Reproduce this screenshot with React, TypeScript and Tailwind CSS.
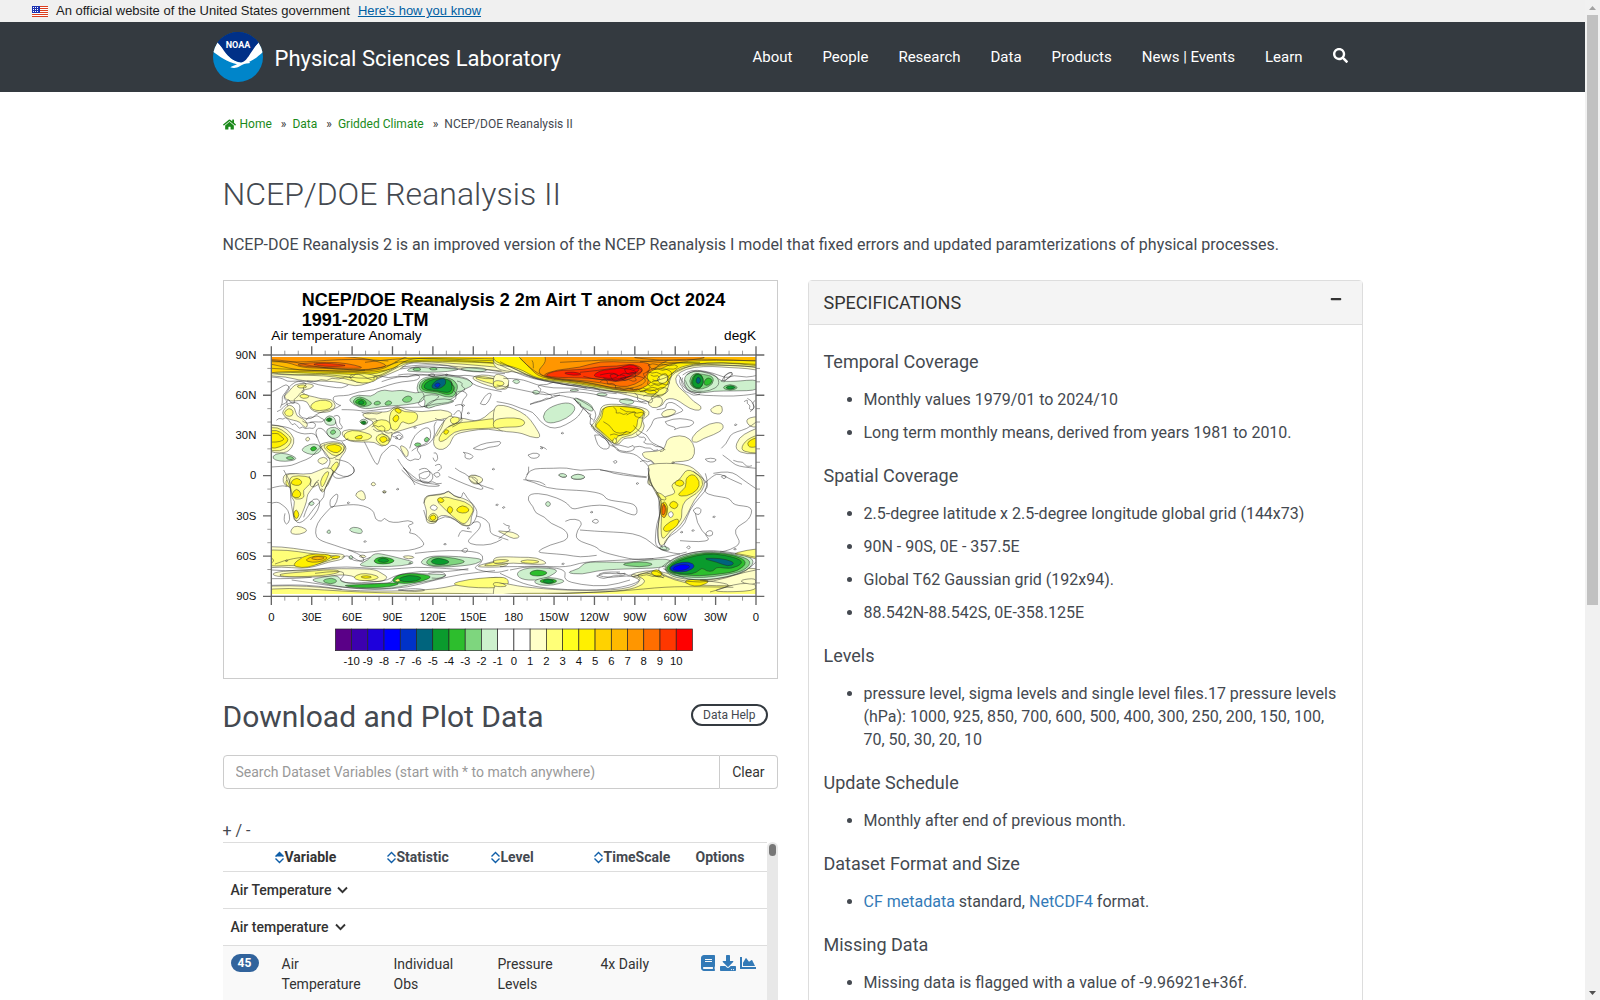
import type { ReactNode } from "react";
import { FaBook, FaChartArea, FaDownload, FaHome, FaMinus, FaSearch } from "react-icons/fa";

const navItems = ["About", "People", "Research", "Data", "Products", "News | Events", "Learn"];

const crumbs = ["Data", "Gridded Climate"];

const specs: { title: string; items: ReactNode[] }[] = [
  {
    title: "Temporal Coverage",
    items: ["Monthly values 1979/01 to 2024/10", "Long term monthly means, derived from years 1981 to 2010."],
  },
  {
    title: "Spatial Coverage",
    items: [
      "2.5-degree latitude x 2.5-degree longitude global grid (144x73)",
      "90N - 90S, 0E - 357.5E",
      "Global T62 Gaussian grid (192x94).",
      "88.542N-88.542S, 0E-358.125E",
    ],
  },
  {
    title: "Levels",
    items: [
      "pressure level, sigma levels and single level files.17 pressure levels (hPa): 1000, 925, 850, 700, 600, 500, 400, 300, 250, 200, 150, 100, 70, 50, 30, 20, 10",
    ],
  },
  { title: "Update Schedule", items: ["Monthly after end of previous month."] },
  {
    title: "Dataset Format and Size",
    items: [
      <>
        <a href="#cf" className="text-[#337ab7]">CF metadata</a> standard,{" "}
        <a href="#netcdf" className="text-[#337ab7]">NetCDF4</a> format.
      </>,
    ],
  },
  { title: "Missing Data", items: ["Missing data is flagged with a value of -9.96921e+36f."] },
];

// anomaly scale, coldest first
const scale = [
  "#5a0087", "#3c00af", "#1e00dc", "#0000ff", "#0032c8", "#00647d", "#0a9b2d", "#2dbe2d", "#7ed67e", "#cdf0cd", "#ffffff",
  "#ffffff", "#ffffc8", "#ffff78", "#ffff1e", "#fff000", "#ffd200", "#ffb900", "#ff9600", "#ff6e00", "#ff3700", "#ff0000",
];

// [index into scale, or -1 for a bare contour, points]
type Shape = [number, string];

const northEast: Shape[] = [
  [12, "140,230 900,230 900,300 820,282 740,285 700,270 640,266 580,262 555,285 500,305 460,325 420,335 380,322 330,318 260,318 215,305 140,302"],
  [13, "140,230 900,230 900,282 800,272 700,264 590,258 545,278 510,298 470,316 440,326 390,310 330,302 240,300 140,292"],
  [15, "140,230 900,230 900,270 800,262 640,258 560,262 530,280 490,296 420,300 380,296 300,296 230,292 140,290"],
  [16, "140,230 900,230 900,254 780,250 600,248 560,262 540,280 480,292 400,294 300,290 180,290 140,300"],
  [17, "140,230 620,230 560,250 530,268 500,284 430,290 330,286 250,286 190,272 140,262"],
  [18, "140,230 430,246 500,262 520,276 440,286 330,280 260,278 220,262 140,254"],
  [19, "240,268 300,262 370,262 420,270 450,280 380,280 300,276 265,274"],
  [20, "290,267 330,264 370,268 400,272 350,275 310,272"],
  [13, "400,300 450,294 490,304 480,320 440,326 410,316"],
  [9, "570,288 600,274 640,280 690,276 740,282 700,290 640,292 600,290"],
  [9, "730,280 790,276 820,284 800,292 750,288"],
  [8, "590,282 612,276 620,286 600,288"],
  [8, "640,280 660,276 670,284 650,286"],
  [12, "765,308 800,298 840,304 880,314 880,346 840,338 800,326"],
  [13, "776,308 800,303 850,314 880,324 880,338 830,326 800,318"],
  [9, "604,340 614,312 656,302 700,302 760,312 778,330 744,344 726,360 708,374 676,382 650,398 624,398 634,378 612,356"],
  [8, "610,342 618,316 656,306 708,308 730,330 724,350 716,366 690,366 660,354 630,354"],
  [7, "616,340 628,314 664,308 704,314 718,334 714,356 692,360 670,350 634,348"],
  [6, "624,334 640,316 680,308 710,318 712,346 698,354 670,348 634,344"],
  [5, "648,334 662,316 690,308 694,326 678,340 656,342"],
  [4, "656,330 668,322 678,328 668,340"],
  [9, "400,372 430,358 470,366 486,350 510,344 530,350 560,344 604,356 624,348 630,376 600,386 550,392 500,394 450,404 414,388"],
  [8, "412,378 432,362 462,376 474,388 440,398 420,388"],
  [8, "560,372 580,360 594,370 584,382 566,382"],
  [8, "474,384 490,376 500,386 482,392"],
  [8, "506,388 520,374 534,384 520,392"],
  [7, "418,380 436,368 456,380 452,394 428,388"],
  [6, "426,382 440,374 450,384 438,390"],
  [9, "630,392 650,376 690,370 722,378 700,386 660,392 640,402"],
  [12, "204,366 222,350 238,328 270,324 300,330 286,342 256,346 270,360 300,366 320,372 350,372 364,392 350,410 310,414 286,404 278,378 250,376 226,380"],
  [13, "244,332 268,328 278,338 252,340"],
  [13, "250,362 270,356 286,366 264,372"],
  [13, "284,394 300,378 332,374 354,384 348,402 312,408 294,404"],
  [12, "200,414 210,400 222,388 240,398 244,424 264,430 280,448 272,462 254,440 236,436 214,430"],
  [13, "206,412 222,398 236,408 232,424 214,424"],
  [12, "150,450 190,450 216,462 240,490 232,518 210,536 150,530"],
  [13, "150,460 188,456 214,474 232,492 222,514 196,530 150,524"],
  [15, "150,470 186,464 208,480 222,494 210,508 180,522 150,514"],
  [15, "150,478 190,474 196,484 210,492 196,500 170,502 150,498"],
  [9, "326,434 342,420 360,428 364,448 346,452 332,448"],
  [7, "330,434 344,426 354,434 342,442"],
  [6, "336,434 344,429 350,434 342,438"],
  [9, "334,462 360,454 380,470 372,488 350,492 336,478"],
  [8, "344,470 358,462 364,474 350,480"],
  [9, "430,440 446,430 462,440 450,452"],
  [7, "434,442 448,436 456,444 446,450"],
  [6, "440,442 448,438 452,444 446,447"],
  [12, "376,472 400,462 440,468 460,456 480,440 450,430 440,416 470,410 520,412 534,398 548,392 570,404 620,412 680,402 716,416 700,430 660,436 610,450 560,466 530,474 528,500 500,518 480,500 440,502 396,498"],
  [13, "384,478 410,464 450,472 474,482 460,496 420,498 392,494"],
  [13, "526,408 548,396 566,412 606,410 610,436 580,450 560,436 550,464 530,468 522,440"],
  [13, "478,490 500,472 524,488 522,508 500,514"],
  [13, "470,442 500,432 526,440 528,466 500,470 480,460"],
  [15, "418,486 442,478 442,492 422,492"],
  [15, "490,490 508,482 520,494 502,506"],
  [15, "530,432 546,416 554,430 542,444"],
  [15, "536,404 548,398 562,408 552,418"],
  [9, "256,524 284,506 312,508 322,526 300,540 276,536"],
  [7, "284,520 298,512 308,522 292,530"],
  [9, "170,544 196,532 236,542 246,554 210,560 180,556"],
  [8, "210,548 228,543 240,552 222,555"],
  [12, "308,510 340,500 370,500 394,512 392,530 372,552 376,570 350,600 336,640 306,640 330,590 350,560 330,530"],
  [13, "322,512 350,502 386,508 388,530 362,546 340,532"],
  [15, "330,514 360,506 384,518 368,536 344,528"],
  [13, "340,590 362,558 374,566 352,600"],
  [12, "304,556 326,544 342,556 322,572"],
  [12, "270,492 280,484 286,494 276,500"],
  [12, "202,600 230,594 290,604 320,600 310,640 208,640"],
  [13, "210,612 250,602 292,612 288,640 216,640"],
  [15, "224,616 246,606 264,620 252,634 228,630"],
  [8, "596,508 608,502 622,508 606,517"],
  [8, "626,494 636,484 644,494 632,503"],
  [12, "660,480 680,446 704,420 716,428 750,430 780,440 810,428 836,400 880,396 880,474 820,460 760,468 716,478 706,508 684,526 660,520 654,500"],
  [13, "670,490 690,460 720,444 770,440 820,432 880,428 880,456 820,460 760,462 716,470 694,494 674,502"],
  [15, "684,474 692,462 704,468 694,480"],
  [13, "704,432 718,424 736,430 728,444 710,448"],
  [12, "554,510 570,516 582,530 576,550 562,532"],
  [12, "760,604 780,598 808,616 786,630 766,622"],
  [-1, "775,520 800,506 830,502 860,498 852,514 820,516 800,526 778,522 775,520"],
  [-1, "745,532 760,534 778,544 764,554 748,548 752,538 745,532"],
  [-1, "169,576 200,574 230,572 256,560 290,548 310,520 330,508"],
  [-1, "306,488 300,470 310,458 326,462 340,484 360,494 384,500 400,490"],
  [-1, "360,552 380,556 400,562 416,578 420,592 400,604 370,612 356,606 352,596"],
  [-1, "448,500 456,516 466,536 478,560 488,572 494,552 500,536 516,522 530,508 548,516 560,530 570,548 586,560 600,550 612,556 620,542 604,526 612,514 630,512 650,500 660,478 656,452 664,440"],
  [-1, "584,520 590,494 610,470 634,456 646,462 648,488 636,506 606,516 590,528"],
  [-1, "548,552 556,566 575,590 590,612 600,630"],
  [-1, "612,598 630,588 650,590 656,610 640,626 616,622 612,598"],
  [-1, "656,534 664,530 670,552 660,562 654,548"],
  [-1, "660,572 674,564 682,580 668,588"],
  [-1, "169,306 200,308 216,320 240,318 276,318 310,330 350,336 380,340 400,330"],
  [-1, "169,352 194,340 214,326 226,340 210,356 206,372 220,380 200,390"],
  [-1, "186,410 200,404 210,390 230,382 252,384 256,400 250,416 262,430 290,432 300,420 326,408 360,402 378,390"],
  [-1, "376,392 360,386 352,366 370,362 400,362 430,350 476,346 520,330 560,320 610,316 616,300 580,296 550,300"],
  [-1, "380,404 420,404 450,410 500,402 560,396 620,398 660,386 700,384 726,372 720,352 744,346 760,360 744,372 740,392"],
  [-1, "610,386 620,364 650,358 676,362 660,376 640,390 620,398 610,386"],
  [-1, "560,276 620,268 700,272 780,280 860,288"],
  [-1, "556,282 620,272 700,280 790,290 870,296"],
  [-1, "500,320 540,306 580,304 620,300 640,300 680,296 720,302 760,310 770,326 800,338 860,350"],
  [-1, "720,392 742,384 744,404 736,424 744,436 728,448 712,456"],
  [-1, "796,386 810,360 830,352 826,370 812,392 796,386"],
  [-1, "660,430 680,440 690,430 680,460 664,484"],
  [-1, "716,420 730,400 742,420 736,440 700,456"],
  [-1, "300,600 306,608 300,614 296,606 300,600"],
  [-1, "169,260 260,262 330,256 430,252 520,258"],
  [-1, "169,280 240,284 330,288 420,290 500,278 548,262"],
  [-1, "169,296 230,302 320,296 400,306 460,312 500,300 550,272"],
  [-1, "540,262 620,254 720,256 820,262 880,268"],
  [-1, "169,254 230,258 280,272 360,282 450,286"],
  [-1, "450,262 540,250 660,250 780,256 880,258"],
  // Scandinavia, Mediterranean, Black and Caspian seas
  [-1, "196,398 204,382 200,366 212,352 222,336 236,324 250,318 268,322 276,330 262,336 270,350 256,352 248,366 236,372 240,386 226,384 222,372 214,380 218,392"],
  [-1, "184,436 192,428 204,434 212,426 222,436 232,452 238,444 246,452 254,462 262,454 270,462 284,458 296,462 304,448 292,440 276,446 262,438"],
  [-1, "272,436 280,424 294,428 306,420 318,430 330,434 320,442 300,440 284,442"],
  [-1, "356,424 368,418 376,430 372,444 384,456 378,464 366,456 362,440"],
  [-1, "169,450 186,452 214,456 230,462 246,472 270,478 290,474 304,480 310,496 318,514 326,530 336,548 352,552 372,540 386,528 392,512 380,500"],
  // Siberian coast
  [-1, "276,318 300,322 318,312 336,318 350,308 372,314 390,304 410,310 420,296 440,300 456,310 480,318 474,304 490,300 520,310 548,302 580,308 600,296 640,300 660,306 690,298 720,304 750,300 780,304 810,312 850,310 880,320"],
  [-1, "640,300 650,294 662,300 654,306 640,300"],
  [-1, "700,312 712,318 708,330 722,336 714,348 728,356 720,364"],
  [-1, "726,318 744,322 738,334 752,340 744,350"],
  // Tibet and the western ranges
  [-1, "470,456 480,448 490,458 500,450 512,460 506,470 520,476 534,470 528,482 540,488 550,478 562,484 554,494"],
  [-1, "474,462 486,472 498,466 504,478 518,482 528,494 514,498"],
  [-1, "440,412 456,418 470,414 486,418 500,412"],
  [-1, "536,476 548,470 560,476 566,488 552,496 542,486"],
  [-1, "450,428 466,434 482,430 488,440 476,448"],
];

const northWest: Shape[] = [
  [12, "-20,230 800,230 800,290 740,280 690,278 640,274 580,276 540,290 524,310 534,336 560,356 580,380 606,394 600,408 570,402 540,380 520,370 496,372 488,392 470,396 450,382 420,370 360,354 280,340 200,322 110,314 60,292 -20,284"],
  [13, "-20,230 800,230 800,284 740,272 640,270 570,272 540,286 512,300 506,336 490,366 440,364 400,354 330,348 250,332 130,316 80,300 30,272 -20,270"],
  [15, "-20,230 800,230 800,276 720,266 620,262 540,274 510,300 504,330 480,346 440,352 370,348 290,336 200,320 110,312 60,280 -20,262"],
  [17, "40,230 800,230 800,258 700,256 600,256 530,262 480,280 456,310 420,350 360,346 270,328 200,318 120,308 90,280 70,258"],
  [18, "130,230 580,230 500,256 460,280 466,310 430,342 370,348 270,322 200,316 140,310 110,290 140,260"],
  [19, "120,302 170,284 240,278 300,258 380,262 450,262 450,284 430,316 380,338 340,330 270,318 180,312"],
  [20, "134,300 170,286 250,284 300,274 350,274 400,266 436,284 400,310 350,322 290,310 200,308 150,306"],
  [21, "276,304 300,286 350,282 376,272 400,268 424,284 390,302 372,314 340,320 310,308"],
  [21, "186,294 220,290 250,298 220,302"],
  [18, "380,246 470,246 640,244 560,258 480,256"],
  [15, "440,300 460,282 500,280 520,296 500,322 470,330 444,318"],
  [13, "470,310 490,296 508,306 496,326 476,324"],
  [15, "430,346 460,334 480,346 466,358 440,356"],
  [12, "-20,296 10,300 30,316 20,340 -20,346"],
  [13, "-20,316 10,318 14,330 -20,340"],
  [9, "34,318 50,312 62,320 50,328"],
  [9, "126,426 144,398 200,380 228,394 218,418 180,440 142,446"],
  [9, "218,366 250,376 278,392 280,412 254,400 236,388"],
  [9, "350,378 380,368 408,380 384,392"],
  [9, "94,350 110,344 122,354 106,360"],
  [9, "286,358 306,352 328,360 300,364"],
  [9, "206,346 224,342 240,346 220,350"],
  [12, "-20,392 10,390 40,400 80,420 104,452 126,490 90,486 60,472 -20,468"],
  [13, "-20,434 20,428 64,430 78,444 62,456 10,456 -20,462"],
  [12, "280,446 300,420 302,394 330,386 400,392 444,402 450,420 424,434 436,452 422,478 396,490 370,488 356,512 326,498 300,472 270,456"],
  [13, "280,452 304,422 306,394 400,394 440,410 426,422 426,458 396,482 362,486 350,510 322,494 300,468"],
  [15, "284,452 308,428 308,398 340,392 380,396 430,402 432,420 410,432 414,454 386,480 352,480 344,506 316,480 296,462"],
  [13, "336,500 344,486 352,498 344,508"],
  [12, "440,382 470,362 490,372 482,396 456,400"],
  [12, "480,418 500,402 528,404 526,416 496,430"],
  [12, "628,404 650,390 668,392 666,418 640,416"],
  [12, "572,498 586,472 630,444 666,442 672,462 640,480 610,490 590,504"],
  [12, "424,530 470,530 496,520 500,490 540,480 570,490 586,520 580,552 550,560 516,560 520,580 560,600 610,640 440,640 446,600 466,570 456,556 432,550"],
  [13, "508,624 536,614 550,598 580,600 610,640 530,640"],
  [15, "540,612 560,604 576,604 602,640 560,640"],
  [12, "704,524 716,488 750,468 790,452 790,534 740,538"],
  [13, "720,524 740,492 790,474 790,534 750,534"],
  [15, "740,504 756,492 790,482 790,510 750,520"],
  [12, "734,430 790,422 790,454 750,458"],
  [9, "550,320 560,294 600,286 650,304 660,318 700,320 780,312 780,346 700,348 640,348 600,356 562,346"],
  [8, "566,318 580,294 610,298 640,304 640,328 606,344 578,340"],
  [7, "572,320 584,294 606,298 612,322 600,344 578,336"],
  [6, "576,320 586,296 606,300 612,324 598,342 580,334"],
  [5, "586,320 594,302 604,316 596,328"],
  [7, "612,318 624,306 640,316 626,332 612,330"],
  [8, "664,338 690,326 718,338 690,348"],
  [6, "674,338 692,330 710,338 690,344"],
  [9, "172,600 186,596 204,604 190,609"],
  [9, "210,606 234,596 258,606 244,614 220,613"],
  [-1, "-10,380 30,386 60,400 100,410 120,440 150,460 180,458 214,440 236,424 250,400"],
  [-1, "220,368 236,390 264,412 274,430 268,446 280,456 300,476 330,500 346,520 360,532 390,534 410,540 432,560 450,576 444,600 448,630"],
  [-1, "230,370 256,384 280,400 290,420 280,440"],
  [-1, "284,480 300,476 326,502 330,520 310,524 292,510 284,480"],
  [-1, "336,510 360,508 386,520 400,508 406,524 380,532 352,524"],
  [-1, "400,452 416,470 440,478 450,500 470,510 496,524"],
  [-1, "440,470 456,450 460,430 486,428 520,420 540,412 552,406 536,394 516,380 496,386 500,400 470,404"],
  [-1, "496,440 520,430 560,432 586,440 570,456 540,456 520,466 530,458 500,450 496,440"],
  [-1, "536,300 548,320 560,346 590,360 640,362 700,364 760,358 780,352"],
  [-1, "548,300 560,290 590,284 640,294 680,310 700,300 740,308 775,300"],
  [-1, "560,300 572,290 600,286 650,300 660,330 630,348 590,350 566,340 556,316"],
  [-1, "664,320 676,296 700,290 690,306 668,320"],
  [-1, "84,540 100,532 122,538 112,550 92,550 84,540"],
  [-1, "340,560 348,554 352,562 344,566 340,560"],
  [-1, "616,552 634,548 652,554 640,562 622,560 616,552"],
  [-1, "80,600 90,584 120,580 160,580 200,578 240,588 300,580 340,596 400,604 440,608"],
  [-1, "70,614 90,616 120,620 136,630"],
  [-1, "664,520 680,506 690,480 710,470 740,462 770,440"],
  [-1, "668,540 690,556 706,570 730,576 768,580"],
  [-1, "610,628 640,600 660,596 690,612 726,628"],
  [-1, "742,370 756,376 764,400 750,410"],
  [-1, "-10,330 40,340 90,350 140,362 180,352 230,350 280,356 330,370 400,376 440,386"],
  [-1, "10,310 60,310 110,330 160,340 220,338 290,350 350,356"],
  [-1, "90,388 120,380 150,370 180,360"],
  [-1, "0,260 40,280 80,300 130,318 220,332 300,346 380,354"],
  [-1, "0,270 50,294 100,312 170,324 260,340"],
  [-1, "60,250 100,290 150,310 250,320 330,338 400,340"],
  [-1, "180,262 260,258 330,254 430,258 500,264 600,262"],
  [-1, "240,292 300,286 360,276 420,290 380,310 300,316 250,304"],
  [-1, "300,300 330,292 360,300 340,312 310,308"],
  [-1, "360,310 400,300 440,310 430,330 390,340"],
  [-1, "440,290 480,270 540,262 620,268 700,272 768,276"],
  [-1, "456,320 500,310 520,290 580,268 660,262 768,268"],
  [-1, "420,260 500,254 620,252 768,258"],
  [-1, "430,340 460,350 480,336 508,340 500,356 470,362"],
  [-1, "360,400 380,414 410,408 400,424 430,430"],
  [-1, "310,440 330,450 340,470 360,476 380,470"],
  [-1, "96,256 100,262 100,280"],
  // Alaska and the Aleutians
  [-1, "90,388 106,380 124,378 140,368 150,372 160,362 146,358 130,350 116,352 126,342 112,336 120,328 140,330 160,320 180,326 210,332 236,330 260,340 280,336 300,346"],
  [-1, "160,362 180,360 200,366 218,368 230,380 244,386 240,396 254,400 262,414 276,418 266,426 280,434"],
  // Canadian archipelago and Hudson Bay
  [-1, "300,320 310,312 324,318 320,328 336,324 350,332 342,340 360,338 372,346 386,338 400,346 414,340 420,350 436,346"],
  [-1, "330,300 344,294 352,304 366,298 380,306 372,314 356,312 348,320 336,314 330,300"],
  [-1, "374,282 390,276 402,284 416,278 428,286 418,296 400,292 388,300 376,292 374,282"],
  [-1, "360,300 372,292 384,298 396,290 410,298 402,308 412,316 398,320 386,312 374,318 364,310"],
  [-1, "430,296 444,288 456,296 470,290 484,300 496,294 506,304 500,316 512,324 498,332 486,324 476,334 462,326 452,336 440,326 448,314 434,308 430,296"],
  [-1, "452,300 462,306 474,300 480,312 470,320 458,314"],
  [-1, "444,270 460,264 476,272 492,266 508,274 524,268 536,276 520,284 504,280 488,288 472,280 456,284 444,270"],
  [-1, "404,354 416,362 410,374 424,382 438,376 450,386 460,378 452,366 464,358 478,362"],
  [-1, "420,350 436,344 450,350 462,344 472,352 460,362 444,358 430,364"],
  [-1, "340,396 352,404 346,416 360,412 370,420 382,414"],
  [-1, "380,420 396,410 412,416 424,410 436,418 430,428"],
  // Rockies and Gulf coast
  [-1, "270,446 284,456 280,466 294,474 304,486 314,490 324,500 330,512 344,514 356,524"],
  [-1, "330,480 344,474 356,484 370,478 378,468 392,474"],
  [-1, "408,476 420,490 432,484 440,496 428,500 440,508 456,506 468,516 484,514 496,526 480,530"],
  [-1, "404,516 420,512 436,520 452,518 460,528 474,524"],
  [-1, "420,560 432,554 442,562 452,556 460,566"],
  // Greenland edge and Iceland
  [-1, "542,306 536,322 546,334 552,348 568,354 580,362 600,358"],
  [-1, "548,308 542,324 556,342 574,352 604,352"],
  [-1, "666,320 676,312 670,304 682,298 690,292 700,296 692,306 680,312 672,322"],
  [-1, "732,380 744,372 740,386 752,392 746,402 758,406 764,394 756,384 766,376"],
  [-1, "700,556 716,562 728,560 740,576 756,572"],
  [-1, "120,514 134,518 140,524"],
];

const southEast: Shape[] = [
  [12, "208,14 240,10 290,14 330,-10 360,0 340,30 326,70 314,60 308,30 296,50 276,74 276,92 262,130 250,154 236,152 234,120 240,92 230,86 226,50"],
  [13, "220,22 250,16 290,22 286,44 262,60 270,84 240,90 230,72"],
  [13, "314,36 330,6 344,4 336,24 322,56"],
  [15, "228,34 246,22 264,36 252,48 230,44"],
  [15, "230,72 244,54 260,70 252,84 234,82"],
  [15, "234,132 244,116 254,134 244,150"],
  [9, "278,102 290,92 300,100 290,108"],
  [12, "226,184 236,168 260,170 280,182 254,194 230,192"],
  [12, "418,76 432,62 446,62 454,88 440,92"],
  [12, "466,42 476,35 484,44 474,49"],
  [12, "500,66 508,60 516,66 508,70"],
  [12, "758,18 780,14 808,26 792,44 766,34"],
  [9, "400,180 414,170 442,176 442,192 416,188"],
  [9, "332,188 344,176 348,192"],
  [12, "626,100 630,78 660,74 690,70 700,62 716,78 744,84 774,100 778,122 768,140 768,168 740,168 722,148 690,134 668,140 666,158 646,162 632,154 636,122"],
  [13, "664,92 690,78 716,88 750,94 778,116 768,136 750,166 726,150 700,128 680,108"],
  [13, "638,142 654,126 670,138 666,156 646,156"],
  [15, "642,142 656,132 666,144 652,154"],
  [15, "694,120 704,106 716,118 706,134"],
  [15, "722,118 742,104 766,118 754,130 730,128"],
  [15, "664,90 676,80 690,92 678,100"],
  [11, "642,114 654,102 670,112 660,124"],
  [12, "130,230 200,230 270,240 340,250 390,252 386,268 340,276 300,290 260,296 200,290 130,296"],
  [13, "130,240 220,240 280,250 340,256 380,260 340,272 290,288 220,286 150,290"],
  [15, "230,286 262,260 300,250 356,256 334,272 296,288 260,294"],
  [16, "268,270 300,256 342,260 324,274 290,278"],
  [17, "284,264 310,258 334,264 306,271"],
  [15, "344,262 362,256 380,260 360,268"],
  [12, "170,308 240,300 340,296 420,296 480,298 500,310 520,322 500,336 440,332 410,316 370,314 340,320 260,322 180,320"],
  [13, "190,312 260,306 350,298 380,304 350,314 280,320 200,320"],
  [13, "414,322 436,310 470,312 496,322 470,332 430,332"],
  [15, "434,320 456,316 474,322 450,326"],
  [12, "130,350 220,346 330,352 420,364 640,362 740,342 800,326 880,318 880,400 130,400"],
  [13, "130,360 220,354 330,360 430,366 560,370 700,370 880,372 880,400 130,400"],
  [13, "704,342 760,328 830,322 880,322 880,352 820,354 760,352"],
  [9, "430,284 460,270 478,248 520,256 560,266 606,278 560,288 500,290 450,290"],
  [7, "474,270 500,258 544,270 524,282 484,282"],
  [6, "484,272 504,262 526,272 506,279"],
  [9, "612,278 640,258 700,258 760,262 806,268 784,282 740,288 680,292 640,288"],
  [8, "630,276 656,258 720,264 760,276 700,288 646,288"],
  [6, "644,274 668,262 708,274 690,284 660,284"],
  [9, "280,330 330,320 370,316 380,336 420,342 480,340 530,340 536,320 580,310 640,312 706,314 660,330 600,340 560,350 500,358 400,354 340,344"],
  [8, "318,332 350,322 370,334 346,344"],
  [7, "376,346 440,344 500,340 562,338 524,352 430,354"],
  [7, "526,336 550,312 600,310 656,318 624,334 570,342"],
  [6, "546,328 580,314 624,322 604,334 566,336"],
  [13, "538,332 548,325 558,330 548,337"],
  [12, "560,260 580,256 602,262 580,268"],
  [12, "780,290 820,278 880,264 880,290 820,292"],
  [13, "800,286 840,276 880,268 880,282 830,288"],
  [9, "400,262 408,254 416,264 406,269"],
  [12, "430,258 444,254 456,260 442,264"],
  [-1, "350,110 330,130 306,160 300,190 310,210 360,226 400,240 450,250 500,240 560,244 600,238 630,226 620,210 600,190 580,190 590,180 576,166 600,160 580,150 550,158 520,156 508,142 500,156 480,148 478,126 460,112 430,104 400,104 350,110"],
  [-1, "206,0 214,14 228,40 226,80 230,110 236,140 246,160 262,156 280,140 300,110 330,80 326,60 344,30 356,4"],
  [-1, "169,100 186,94 204,106 220,120 226,150 214,166 206,150 210,130"],
  [-1, "169,54 200,46 216,50"],
  [-1, "346,90 356,76 370,70 366,96 352,116 344,106 346,90"],
  [-1, "266,142 276,110 296,84 316,90 310,120 286,150"],
  [-1, "350,0 370,16 400,22 420,6 414,-10"],
  [-1, "560,0 580,20 600,38 640,50 680,48 660,42 620,38 590,16 564,-8"],
  [-1, "566,-6 578,8 590,24 606,34 624,32 640,38 654,34 664,42 680,40"],
  [-1, "700,20 730,34 770,50 800,60 806,54 790,40 770,22"],
  [-1, "720,-6 736,6 750,10 762,22 776,20 790,30 782,40 800,46 816,52 836,58"],
  [-1, "626,100 632,78 660,76 690,72 700,60 716,78 740,86 744,62 756,84 776,104 790,130 770,170 740,164 722,150 690,136 660,156 636,154 626,120"],
  [-1, "784,138 800,140 826,160 824,190 850,200 880,210"],
  [-1, "770,160 790,150 800,170 770,200 756,216 780,226 830,224 860,208"],
  [-1, "400,240 430,250 450,268 440,278 410,260"],
  [-1, "600,250 680,240 780,244 806,256 800,280 770,296 840,310 880,300"],
  [-1, "740,242 750,232 760,238 752,250 740,242"],
  [-1, "169,300 260,306 350,290 440,292 520,300 600,290 700,296 760,300"],
  [-1, "300,310 380,300 390,316 370,332 400,340 480,336 520,330 540,316 620,302 700,306 760,296"],
  [-1, "230,330 300,340 380,352 480,360 580,352 660,330 740,312 840,302"],
  [-1, "169,346 240,344 310,348 380,358"],
  [-1, "169,326 230,326 290,322"],
  [-1, "550,360 590,354 640,360 600,366 550,360"],
  [-1, "640,310 670,304 696,312 680,326 650,324"],
  [-1, "180,282 210,270 260,262"],
  [-1, "169,280 180,272 169,264"],
  [-1, "612,0 630,-10 650,10 630,30 616,22"],
  [-1, "656,12 668,4 678,16 664,24 656,12"],
  [-1, "730,200 736,180 754,184 770,186"],
  [-1, "282,18 290,34 284,48 296,52 300,38 312,30"],
  [-1, "380,262 398,254 408,268 426,274 446,270 466,262"],
];

const southWest: Shape[] = [
  [12, "-20,262 20,260 60,262 110,262 148,282 100,284 40,278 -20,284"],
  [13, "54,276 80,268 124,274 100,282"],
  [13, "-20,270 20,268 30,274 -20,282"],
  [12, "440,-20 450,0 442,20 462,60 480,90 480,130 472,180 478,230 496,222 510,190 540,170 564,130 582,90 608,60 616,36 600,10 560,-20"],
  [13, "510,44 540,30 560,-6 600,16 612,44 590,72 554,90 544,120 546,150 510,182 486,214 482,170 486,140 476,90 500,78 530,70"],
  [15, "528,76 560,52 556,24 580,10 600,34 594,60 560,80"],
  [15, "520,40 540,26 556,40 540,52"],
  [15, "504,106 520,90 538,104 524,120"],
  [15, "486,176 510,154 538,144 534,168 500,188"],
  [15, "484,120 490,90 506,110 498,144"],
  [17, "480,134 484,92 502,112 496,148"],
  [19, "484,130 490,98 498,116 492,138"],
  [13, "464,66 484,70 502,88 486,92"],
  [11, "502,132 514,122 522,134 512,146"],
  [12, "-10,182 10,184 40,186 62,200 42,208 16,194"],
  [9, "172,14 190,9 204,18 188,23"],
  [9, "210,20 234,10 258,20 244,28 218,27"],
  [9, "134,102 144,92 154,102 144,112"],
  [9, "474,234 490,226 514,238 494,244"],
  [12, "-20,340 20,340 60,350 200,362 380,360 430,330 380,316 440,300 490,306 540,320 640,330 700,300 800,290 800,400 -20,400"],
  [13, "-20,370 200,370 360,364 420,350 440,330 400,314 470,306 520,330 600,348 700,346 800,356 800,400 -20,400"],
  [13, "-20,336 10,340 24,350 -20,350"],
  [12, "630,366 680,350 720,340 768,340 768,364"],
  [13, "690,254 740,240 800,234 800,280 760,262"],
  [15, "448,308 470,296 490,310 476,324"],
  [15, "550,332 590,326 634,332 600,350 568,346"],
  [9, "48,310 70,296 110,292 180,298 150,320 110,332 62,328"],
  [7, "86,308 110,298 146,306 130,318 96,318"],
  [9, "98,334 130,322 170,324 200,334 160,346 118,346"],
  [7, "112,334 140,324 178,332 150,344"],
  [6, "124,334 144,326 166,334 146,342"],
  [9, "196,308 240,296 254,276 320,276 380,278 440,270 504,266 520,280 480,294 400,296 300,300 246,314"],
  [8, "358,284 400,276 440,276 464,284 420,292"],
  [9, "490,290 520,266 570,248 620,242 700,250 768,266 744,302 690,320 620,330 550,328 506,316"],
  [8, "494,292 528,266 580,250 630,246 700,252 758,272 734,302 680,314 610,324 540,320 504,310"],
  [7, "498,292 532,268 590,252 640,248 706,256 744,276 714,304 660,312 600,318 536,314 508,306"],
  [6, "504,292 534,272 590,256 640,250 706,262 732,278 694,298 650,290 640,304 620,304 606,292 590,308 560,314 516,308"],
  [5, "608,266 640,264 680,268 706,280 684,290 650,276"],
  [4, "506,294 528,280 566,274 588,288 562,306 520,306"],
  [3, "514,296 540,282 572,286 564,298 532,304"],
  [12, "720,330 768,324 768,344 730,340"],
  [-1, "86,-10 88,6 72,30 100,36 140,54 200,60 260,62 310,72 320,90 370,96 410,104 412,138 380,130 340,110 300,104 250,110 216,120 200,96 140,72 90,70 82,90 100,110 106,130 134,140 150,160 200,180 206,210 150,224 108,246 140,250 200,254 240,262 290,256"],
  [-1, "196,154 210,146 240,150 246,164 232,180 226,210 290,230 300,244 360,260 410,270 500,262 560,246"],
  [-1, "240,180 290,184 340,186 400,190 440,206 466,230 500,246 540,252"],
  [-1, "276,154 286,144 298,154 288,162 276,154"],
  [-1, "300,0 360,8 410,18 440,20"],
  [-1, "444,-6 446,18 456,50 472,66 486,94 482,130 470,160 466,200 466,226 486,240 506,238 490,226 500,204 530,186 556,160 568,120 600,80 626,50 616,30 580,4"],
  [-1, "446,10 452,40 468,62 478,84 476,110 480,140 472,176 474,220 488,234"],
  [-1, "616,10 626,40 610,66 640,78 690,84 700,106 760,110 748,150 710,170 704,190 724,220 690,240 660,246"],
  [-1, "580,120 590,110 606,118 598,136 584,130 580,120"],
  [-1, "586,130 590,160 620,200 640,196 636,180 620,184 616,196 630,210 600,216 540,212"],
  [-1, "640,10 690,0 730,30 768,56"],
  [-1, "664,20 672,14 680,20 672,28 664,20"],
  [-1, "560,232 566,226 572,232 566,238 560,232"],
  [-1, "486,290 520,262 580,246 640,240 710,250 768,262"],
  [-1, "490,296 530,320 600,334 680,322 740,302 768,276"],
  [-1, "480,292 470,300 500,320 560,336 640,336 720,310 768,300"],
  [-1, "0,310 40,330 100,350 200,360 320,360 400,344 430,324 380,316 330,324 290,316 310,306 360,306"],
  [-1, "0,290 60,290 120,288 200,292 250,276 330,272 460,266"],
  [-1, "30,300 70,290 140,290 200,300 190,330 240,344 320,350 390,330"],
  [-1, "290,318 310,308 350,312 380,310 370,318 340,316 310,328 290,318"],
  [-1, "350,308 362,314 374,308 384,318 400,312 420,320 440,312 460,322 476,314 490,324"],
  [-1, "400,320 440,306 470,300 500,324 470,320 440,308"],
  [-1, "120,374 240,368 360,364 500,350 600,350 700,352"],
  [-1, "10,160 20,168 30,166 24,176 34,180 20,186 10,196 -4,206"],
  [-1, "630,366 690,350 680,340 600,330"],
];

const islets = [
  [695, 300], [745, 392], [835, 583], [760, 415], [545, 490], [600, 458], [1042, 475], [1562, 450], [1374, 563], [980, 520],
  [548, 643], [508, 652], [400, 684], [450, 800], [690, 808], [846, 690], [866, 698], [1267, 626], [1130, 712], [1400, 772],
  [1434, 767], [1497, 726], [1560, 823], [760, 760], [1044, 867], [585, 865], [215, 858], [320, 645],
];

const quadrants: { name: string; shift: string; shapes: Shape[] }[] = [
  { name: "ne", shift: "translate(0 0)", shapes: northEast },
  { name: "nw", shift: "translate(855 0)", shapes: northWest },
  { name: "se", shift: "translate(0 585)", shapes: southEast },
  { name: "sw", shift: "translate(855 585)", shapes: southWest },
];

// rounds the corners of a point list by running curves through the midpoints
function curve(points: string, closed: boolean) {
  const p = points.split(" ").map((pair) => pair.split(",").map(Number));
  const mid = (a: number[], b: number[]) => `${(a[0] + b[0]) / 2} ${(a[1] + b[1]) / 2}`;
  if (closed) {
    const parts = p.map((q, i) => `Q${q[0]} ${q[1]} ${mid(q, p[(i + 1) % p.length])}`);
    return `M${mid(p[p.length - 1], p[0])}${parts.join("")}Z`;
  }
  const parts = p.slice(1, -1).map((q, i) => `Q${q[0]} ${q[1]} ${mid(q, p[i + 2])}`);
  const end = p[p.length - 1];
  return `M${p[0][0]} ${p[0][1]}${parts.join("")}L${end[0]} ${end[1]}`;
}

const lonLabels = ["0", "30E", "60E", "90E", "120E", "150E", "180", "150W", "120W", "90W", "60W", "30W", "0"];
const latLabels = ["90N", "60N", "30N", "0", "30S", "60S", "90S"];

function AnomalyMap() {
  return (
    <svg
      viewBox="27 18 1659 1191"
      role="img"
      aria-label="Air temperature anomaly map"
      className="block h-auto w-full font-['Liberation_Sans',sans-serif]"
    >
      <defs>
        <clipPath id="plot">
          <rect x="170" y="246" width="1453" height="711" />
        </clipPath>
      </defs>
      <g fill="#000">
        <text x="260" y="94" fontSize="54" fontWeight="700">NCEP/DOE Reanalysis 2 2m Airt T anom Oct 2024</text>
        <text x="260" y="152" fontSize="54" fontWeight="700">1991-2020 LTM</text>
        <text x="169" y="196" fontSize="41">Air temperature Anomaly</text>
        <text x="1623" y="196" fontSize="41" textAnchor="end">degK</text>
      </g>
      <g clipPath="url(#plot)" strokeLinejoin="round">
        {quadrants.map((q) => (
          <g key={q.name} transform={q.shift}>
            {q.shapes.map(([level, points], i) => (
              <path
                key={i}
                d={curve(points, level >= 0)}
                fill={level >= 0 ? scale[level] : "none"}
                stroke="#222"
                strokeOpacity={0.8}
                strokeWidth={1.7}
              />
            ))}
          </g>
        ))}
        {islets.map(([x, y]) => (
          <path key={`${x}-${y}`} d={`M${x - 4} ${y}l4 -3l4 2l-3 3z`} fill="none" stroke="#333" strokeWidth={1.5} />
        ))}
      </g>
      <g stroke="#666" strokeWidth="4" fill="none">
        <rect x="169" y="240" width="1454" height="724" />
        {Array.from({ length: 37 }, (_, i) => {
          const x = 169 + (i * 1454) / 36;
          const len = i % 3 === 0 ? 26 : 13;
          return <path key={i} strokeWidth={i % 3 === 0 ? 4 : 2} d={`M${x} 240v${-len}M${x} 964v${len}`} />;
        })}
        {Array.from({ length: 19 }, (_, i) => {
          const y = 240 + (i * 724) / 18;
          const len = i % 3 === 0 ? 25 : 12;
          return <path key={i} strokeWidth={i % 3 === 0 ? 4 : 2} d={`M169 ${y}h${-len}M1623 ${y}h${len}`} />;
        })}
      </g>
      <g fill="#111" fontSize="34">
        {lonLabels.map((label, i) => (
          <text key={i} x={169 + (i * 1454) / 12} y="1038" textAnchor="middle">{label}</text>
        ))}
        {latLabels.map((label, i) => (
          <text key={label} x="124" y={251 + (i * 724) / 6} textAnchor="end">{label}</text>
        ))}
        {scale.slice(1).map((_, i) => (
          <text key={i} x={361 + (i + 1) * 48.7} y="1171" textAnchor="middle">{i - 10}</text>
        ))}
      </g>
      <g stroke="#222" strokeWidth="2">
        {scale.map((color, i) => (
          <rect key={i} x={361 + i * 48.7} y="1062" width="48.7" height="65" fill={color} />
        ))}
      </g>
    </svg>
  );
}

function Flag() {
  return (
    <svg viewBox="0 0 16 11" className="h-[11px] w-4" aria-hidden="true">
      <rect width="16" height="11" fill="#fff" />
      {[0, 2, 4, 6, 8, 10].map((y) => (
        <rect key={y} y={y} width="16" height="1" fill="#db3e1f" />
      ))}
      <rect width="8" height="7" fill="#1e33b1" />
      {[1, 3, 5].map((y) => (
        <path key={y} d={`M1 ${y}.5h6`} stroke="#fff" strokeWidth="1" strokeDasharray="1 1" />
      ))}
    </svg>
  );
}

function NoaaLogo() {
  return (
    <svg viewBox="0 0 150 150" className="size-[50px]" role="img" aria-label="NOAA">
      <defs>
        <clipPath id="disc">
          <circle cx="75" cy="75" r="75" />
        </clipPath>
      </defs>
      <g clipPath="url(#disc)">
        <rect width="150" height="150" fill="#0085ca" />
        <path d="M0 0H150V34C128 52 116 70 104 84C96 92 84 93 78 90C52 84 40 66 10 34Z" fill="#003087" />
        <path
          d="M13 31C30 44 38 80 78 91C92 93 98 84 106 74C118 56 126 42 138 30L152 58C138 70 124 84 108 90C112 91 112 93 108 94C96 95 90 97 80 103C72 108 62 109 52 106C56 102 66 101 72 97C42 90 14 70 -2 58Z"
          fill="#fff"
        />
        <path d="M13 31L36 54C46 70 56 86 80 90C92 86 104 70 112 56L138 30V0H13Z" fill="#003087" />
      </g>
      <text
        x="75"
        y="49"
        textAnchor="middle"
        fontSize="27"
        fontWeight="700"
        fill="#fff"
        fontFamily="'Liberation Sans Narrow', Roboto, sans-serif"
      >
        NOAA
      </text>
    </svg>
  );
}

function SortArrows({ active = false }: { active?: boolean }) {
  return (
    <svg viewBox="0 0 10 13" className="h-[13px] w-[11px] shrink-0" fill="none" stroke="#0f5ea8" strokeWidth="1.4" aria-hidden="true">
      <path d="M1 5.5L5 1.500L9 5.500" fill={active ? "#0f5ea8" : "none"} />
      <path d="M1 7.5L5 11.5L9 7.5" />
    </svg>
  );
}

function GroupRow({ label }: { label: string }) {
  return (
    <tr className="border-b border-[#ddd]">
      <td colSpan={6} className="px-2 py-2 font-medium text-[#333]">
        <button type="button" className="flex items-center gap-[6px]">
          {label}
          <svg viewBox="0 0 11 8" className="h-2 w-[11px]" fill="none" stroke="currentColor" strokeWidth="1.9" aria-hidden="true">
            <path d="M1 1.500L5.500 6.200L10 1.500" />
          </svg>
        </button>
      </td>
    </tr>
  );
}

function VariableTable() {
  return (
    <div className="flex">
      <table className="min-w-0 flex-1 table-fixed border-collapse text-left text-sm leading-5">
        <colgroup>
          <col className="w-[51px]" />
          <col className="w-[112px]" />
          <col className="w-[104px]" />
          <col className="w-[103px]" />
          <col className="w-[95px]" />
          <col />
        </colgroup>
        <thead>
          <tr className="border-y border-[#ddd] text-[#444950]">
            <th />
            {["Variable", "Statistic", "Level", "TimeScale"].map((name) => (
              <th key={name} className="py-1 font-bold">
                <button type="button" className={name === "Variable" ? "flex items-center text-[#333]" : "flex items-center"}>
                  <SortArrows active={name === "Variable"} />
                  {name}
                </button>
              </th>
            ))}
            <th className="px-2 py-1 font-bold">Options</th>
          </tr>
        </thead>
        <tbody>
          <GroupRow label="Air Temperature" />
          <GroupRow label="Air temperature" />
          <tr className="h-16 bg-[#f9f9f9] align-top text-[#333]">
            <td className="p-2">
              <span className="flex h-[18px] w-7 items-center justify-center rounded-full bg-[#31639c] text-xs font-bold text-white">
                45
              </span>
            </td>
            <td className="p-2">Air Temperature</td>
            <td className="py-2 pr-4 pl-2">Individual Obs</td>
            <td className="p-2">Pressure Levels</td>
            <td className="p-2">4x Daily</td>
            <td className="py-[9px] pl-3">
              <div className="flex gap-1 text-base text-[#337ab7]">
                <a href="#info" aria-label="Details"><FaBook /></a>
                <a href="#download" aria-label="Download"><FaDownload /></a>
                <a href="#plot" aria-label="Plot"><FaChartArea /></a>
              </div>
            </td>
          </tr>
        </tbody>
      </table>
      <div className="w-[11px] rounded-t-md bg-[#e8e8e8] px-[2px] pt-[2px]">
        <div className="h-3 rounded bg-[#777]" />
      </div>
    </div>
  );
}

function Specifications() {
  return (
    <section className="rounded border border-[#ddd]">
      <header className="flex items-start justify-between border-b border-[#ddd] bg-[#f4f4f4] px-[15px] py-[11px] text-[#333]">
        <h2 className="text-lg leading-[21px]">SPECIFICATIONS</h2>
        <button type="button" aria-label="Collapse" className="mt-[1px] mr-[5px] text-xs">
          <FaMinus />
        </button>
      </header>
      <div className="px-[15px] pt-[27px] pb-[15px]">
        {specs.map((group) => (
          <div key={group.title}>
            <h3 className="text-lg leading-5">{group.title}</h3>
            <ul className="flex list-disc flex-col gap-[10px] pt-4 pb-[22px] pl-10 leading-[23px]">
              {group.items.map((item, i) => (
                <li key={i}>{item}</li>
              ))}
            </ul>
          </div>
        ))}
      </div>
    </section>
  );
}

function WindowScrollbar() {
  return (
    <div className="flex w-[15px] flex-col items-center bg-[#f1f1f1]" aria-hidden="true">
      <svg viewBox="0 0 15 15" className="size-[15px]"><path d="M4 10L7.500 6L11 10Z" fill="#a3a3a3" /></svg>
      <div className="h-[59%] w-[11px] bg-[#c1c1c1]" />
      <svg viewBox="0 0 15 15" className="mt-auto size-[15px]"><path d="M4 6L7.500 10L11 6Z" fill="#505050" /></svg>
    </div>
  );
}

export default function App() {
  return (
    <div className="flex h-screen overflow-hidden bg-white font-[Roboto,sans-serif] text-base text-[#444950]">
      <div className="min-w-0 flex-1 overflow-hidden">
        <div className="flex h-[22px] items-center gap-2 bg-[#f0f0f0] px-8 font-['Liberation_Sans',sans-serif] text-[13px] text-[#1b1b1b]">
          <Flag />
          <p>An official website of the United States government</p>
          <a href="#know" className="text-[#005ea2] underline">Here's how you know</a>
        </div>

        <header className="bg-[#343a40]">
          <div className="mx-auto flex h-[70px] max-w-[1170px] items-center px-[5px]">
            <a href="#home" className="flex items-center gap-3 text-[22px] text-white">
              <NoaaLogo />
              <span className="pt-[2px]">Physical Sciences Laboratory</span>
            </a>
            <nav className="mr-[25px] ml-auto flex items-center gap-[30px] text-[15px] text-white">
              {navItems.map((item) => (
                <a key={item} href="#nav">{item}</a>
              ))}
              <button type="button" aria-label="Search" className="mb-1 text-[15px]"><FaSearch /></button>
            </nav>
          </div>
        </header>

        <main className="mx-auto max-w-[1170px] px-[15px]">
          <nav className="flex items-center pt-[23px] text-xs leading-[18px]">
            <a href="#home" className="flex items-center gap-1 text-[#1a8a1a]">
              <FaHome className="text-[13px]" />
              Home
            </a>
            {crumbs.map((crumb) => (
              <span key={crumb} className="flex">
                <span className="pr-[6px] pl-[9px] text-[#333]">»</span>
                <a href="#crumb" className="text-[#1a8a1a]">{crumb}</a>
              </span>
            ))}
            <span className="pr-[6px] pl-[9px] text-[#333]">»</span>
            <span>NCEP/DOE Reanalysis II</span>
          </nav>

          <h1 className="mt-10 text-[32px] leading-[42px] font-light">NCEP/DOE Reanalysis II</h1>
          <p className="mt-[18px] leading-[23px]">
            NCEP-DOE Reanalysis 2 is an improved version of the NCEP Reanalysis I model that fixed errors and updated
            paramterizations of physical processes.
          </p>

          <div className="mt-6 grid grid-cols-2 items-start gap-[30px]">
            <div>
              <div className="border border-[#ccc]">
                <AnomalyMap />
              </div>
              <div className="mt-5 flex items-start justify-between pr-[10px]">
                <h2 className="text-3xl leading-9">Download and Plot Data</h2>
                <a href="#help" className="mt-[5px] rounded-full border-2 border-[#343a40] px-[10px] text-xs leading-[18px]">
                  Data Help
                </a>
              </div>
              <form className="mt-5 flex h-[34px] text-sm">
                <input
                  type="text"
                  aria-label="Search Dataset Variables"
                  placeholder="Search Dataset Variables (start with * to match anywhere)"
                  className="min-w-0 flex-1 rounded-l border border-[#ccc] px-3 placeholder:text-[#999]"
                />
                <button type="button" className="rounded-r border border-l-0 border-[#ccc] px-3 text-[#333]">Clear</button>
              </form>
              <p className="mt-[30px] leading-[23px]">+ / -</p>
              <VariableTable />
            </div>
            <Specifications />
          </div>
        </main>
      </div>
      <WindowScrollbar />
    </div>
  );
}
